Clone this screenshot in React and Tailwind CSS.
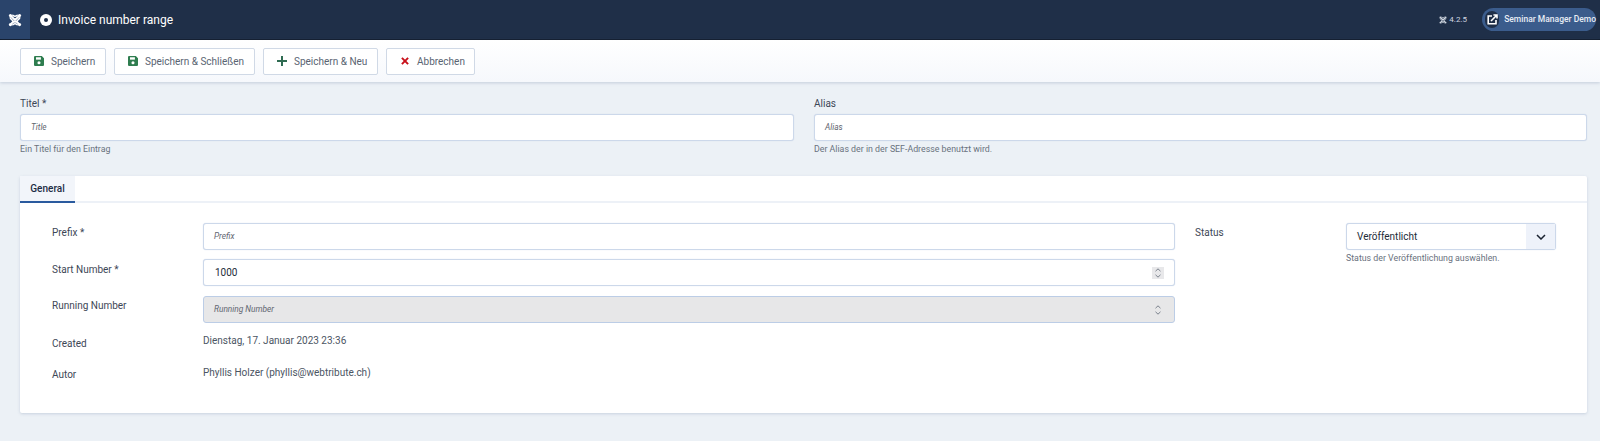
const font = { fontFamily: 'Roboto, "Liberation Sans", sans-serif' };

function JoomlaLogo({ size = 16, color = '#fff' }) {
  return (
    <svg width={size} height={size} viewBox="0 0 16 16" fill="none" stroke={color} strokeLinecap="round">
      <path d="M4 4 L12 12 M12 4 L4 12" strokeWidth="2.2" />
      <path d="M2.6 5.5 C3.5 7.5 6 9 7 10.5 M13.4 5.5 C12.5 7.5 10 9 9 10.5" strokeWidth="1.8" />
      <path d="M5.5 2.6 C7 4 9 4 10.5 2.6 M5.5 13.4 C7 12 9 12 10.5 13.4" strokeWidth="1.8" />
      <circle cx="2.8" cy="2.8" r="1.8" fill={color} stroke="none" />
      <circle cx="13.2" cy="2.8" r="1.8" fill={color} stroke="none" />
      <circle cx="2.8" cy="13.2" r="1.8" fill={color} stroke="none" />
      <circle cx="13.2" cy="13.2" r="1.8" fill={color} stroke="none" />
    </svg>
  );
}

function SaveIcon() {
  return (
    <svg width="10" height="10" viewBox="0 0 11 11">
      <path d="M1.2 0H8.6L11 2.4V9.8A1.2 1.2 0 0 1 9.8 11H1.2A1.2 1.2 0 0 1 0 9.8V1.2A1.2 1.2 0 0 1 1.2 0Z" fill="#2f7d4f" />
      <rect x="2.2" y="1.4" width="5.4" height="2.6" fill="#fff" />
      <circle cx="5.5" cy="7.4" r="1.7" fill="#fff" />
    </svg>
  );
}

function PlusIcon() {
  return (
    <svg width="10" height="10" viewBox="0 0 11 11">
      <path d="M4.4 0H6.6V4.4H11V6.6H6.6V11H4.4V6.6H0V4.4H4.4Z" fill="#2f6b52" />
    </svg>
  );
}

function CloseIcon() {
  return (
    <svg width="8" height="8" viewBox="0 0 9 9">
      <path d="M1 1L8 8M8 1L1 8" stroke="#c8101a" strokeWidth="2.2" />
    </svg>
  );
}

function Spinner() {
  return (
    <svg width="8" height="12" viewBox="0 0 8 12" fill="none" stroke="#7a818c" strokeWidth="1">
      <path d="M1.5 4.2L4 1.8L6.5 4.2M1.5 7.8L4 10.2L6.5 7.8" />
    </svg>
  );
}

function ToolbarButton({ icon, label, width }) {
  return (
    <button className={`flex h-[27px] items-center rounded-[2px] border border-[#d0d9e6] bg-white pl-[12px] text-[10px] whitespace-nowrap text-[#5a6472] ${width}`}>
      <span className="flex w-[11px] justify-center">{icon}</span>
      <span className="ml-[7px]">{label}</span>
    </button>
  );
}

function TextField({ placeholder }) {
  return (
    <div className="flex h-[27px] items-center rounded-[3px] border border-[#ccd8ea] bg-white pl-[10px] text-[8.3px] italic text-[#5f6670] shadow-[0_0_1px_#c5d2e8]">
      {placeholder}
    </div>
  );
}

function FormRow({ label, children, className }) {
  return (
    <div className={`grid grid-cols-[151px_1fr] ${className}`}>
      <div className="text-[10px] text-[#3d4756]">{label}</div>
      {children}
    </div>
  );
}

export default function App() {
  return (
    <div style={font} className="h-[441px] overflow-hidden bg-[#ecf1f6]">
      <header className="flex h-[40px] items-stretch border-b border-[#0f1a2b] bg-[#1f2f48]">
        <div className="flex w-[30px] items-center justify-center bg-[#2a446b]">
          <JoomlaLogo size={14} />
        </div>
        <div className="flex flex-1 items-center pl-[10px]">
          <svg width="12" height="12" viewBox="0 0 12 12">
            <circle cx="6" cy="6" r="6" fill="#fff" />
            <circle cx="6" cy="6" r="2" fill="#1f2f48" />
          </svg>
          <h1 className="ml-[6px] text-[12px] text-white">Invoice number range</h1>
        </div>
        <div className="flex items-center pr-[4px]">
          <JoomlaLogo size={8} color="#cfd6e0" />
          <span className="ml-[2px] mr-[15px] text-[8px] text-[#cfd6e0]">4.2.5</span>
          <div className="flex h-[23px] w-[114px] items-center rounded-full bg-[#3b5c8c] pl-[3px]">
            <span className="flex h-[17px] w-[17px] items-center justify-center rounded-full bg-[#1f2f48]">
              <svg width="11" height="11" viewBox="0 0 11 11" fill="none" stroke="#fff">
                <path d="M5 2H1.2V9.8H9V6" strokeWidth="1.6" />
                <path d="M4 7L9.2 1.8M6.4 1H10V4.6" strokeWidth="1.6" />
              </svg>
            </span>
            <span className="ml-[5px] whitespace-nowrap text-[8.5px] font-medium text-[#e8edf5]">Seminar Manager Demo</span>
          </div>
        </div>
      </header>

      <div className="flex h-[42px] items-center gap-[8px] bg-gradient-to-b from-white to-[#f6f8fc] pl-[20px] shadow-[0_1px_3px_rgba(120,140,170,0.35)]">
        <ToolbarButton icon={<SaveIcon />} label="Speichern" width="w-[86px]" />
        <ToolbarButton icon={<SaveIcon />} label="Speichern & Schließen" width="w-[141px]" />
        <ToolbarButton icon={<PlusIcon />} label="Speichern & Neu" width="w-[115px]" />
        <ToolbarButton icon={<CloseIcon />} label="Abbrechen" width="w-[89px]" />
      </div>

      <div className="grid h-[94px] grid-cols-[774px_773px] gap-x-[20px] pl-[20px] pt-[12px]">
        <div>
          <label className="block h-[20px] pt-[2px] text-[10px] text-[#3d4756]">Titel *</label>
          <TextField placeholder="Title" />
          <p className="mt-[2px] text-[8.8px] text-[#69717d]">Ein Titel für den Eintrag</p>
        </div>
        <div>
          <label className="block h-[20px] pt-[2px] text-[10px] text-[#3d4756]">Alias</label>
          <TextField placeholder="Alias" />
          <p className="mt-[2px] text-[8.8px] text-[#69717d]">Der Alias der in der SEF-Adresse benutzt wird.</p>
        </div>
      </div>

      <section className="ml-[20px] h-[237px] w-[1567px] rounded-[2px] bg-white shadow-[0_1px_3px_rgba(120,140,170,0.3)]">
        <div className="flex h-[27px] border-b-2 border-[#edf1f7]">
          <div className="flex h-[27px] w-[55px] items-center justify-center border-b-2 border-[#2a5a9e] bg-[#f2f5fa] pb-[1px] text-[10px] font-medium text-[#1c2c44]">
            General
          </div>
        </div>
        <div className="flex pl-[32px] pt-[20px]">
          <div className="w-[1123px] shrink-0">
            <FormRow label={<span className="relative top-[2px]">Prefix *</span>} className="h-[36px]">
              <TextField placeholder="Prefix" />
            </FormRow>
            <FormRow label={<span className="relative top-[3px]">Start Number *</span>} className="h-[37px]">
              <div className="flex h-[27px] items-center justify-between rounded-[3px] border border-[#ccd8ea] bg-white pl-[11px] pr-[10px] text-[10px] text-[#222b38] shadow-[0_0_1px_#c5d2e8]">
                1000
                <span className="flex h-[12px] w-[12px] items-center justify-center bg-[#e8e8ea]"><Spinner /></span>
              </div>
            </FormRow>
            <FormRow label={<span className="relative top-[2px]">Running Number</span>} className="h-[36px]">
              <div className="flex h-[27px] items-center justify-between rounded-[3px] border border-[#bccde6] bg-[#e7e7e8] pl-[10px] pr-[12px] text-[8.3px] italic text-[#5f6670]">
                Running Number
                <Spinner />
              </div>
            </FormRow>
            <FormRow label={<span className="relative top-[4px]">Created</span>} className="h-[31px]">
              <div className="pt-[1px] text-[10px] text-[#4b5563]">Dienstag, 17. Januar 2023 23:36</div>
            </FormRow>
            <FormRow label={<span className="relative top-[4px]">Autor</span>} className="h-[30px]">
              <div className="pt-[2px] text-[10px] text-[#4b5563]">Phyllis Holzer (phyllis@webtribute.ch)</div>
            </FormRow>
          </div>
          <div className="ml-[20px] grid grid-cols-[151px_210px]">
            <div className="pt-[2px] text-[10px] text-[#3d4756]">Status</div>
            <div>
              <div className="flex h-[27px] items-stretch rounded-[3px] border border-[#ccd8ea] bg-white text-[10px] text-[#222b38] shadow-[0_0_1px_#c5d2e8]">
                <div className="flex flex-1 items-center pl-[10px]">Veröffentlicht</div>
                <div className="flex w-[29px] items-center justify-center bg-[#eef2fa]">
                  <svg width="10" height="6" viewBox="0 0 10 6" fill="none" stroke="#1a2230" strokeWidth="1.5">
                    <path d="M1 1L5 5L9 1" />
                  </svg>
                </div>
              </div>
              <p className="mt-[2px] text-[8.8px] text-[#69717d]">Status der Veröffentlichung auswählen.</p>
            </div>
          </div>
        </div>
      </section>
    </div>
  );
}
